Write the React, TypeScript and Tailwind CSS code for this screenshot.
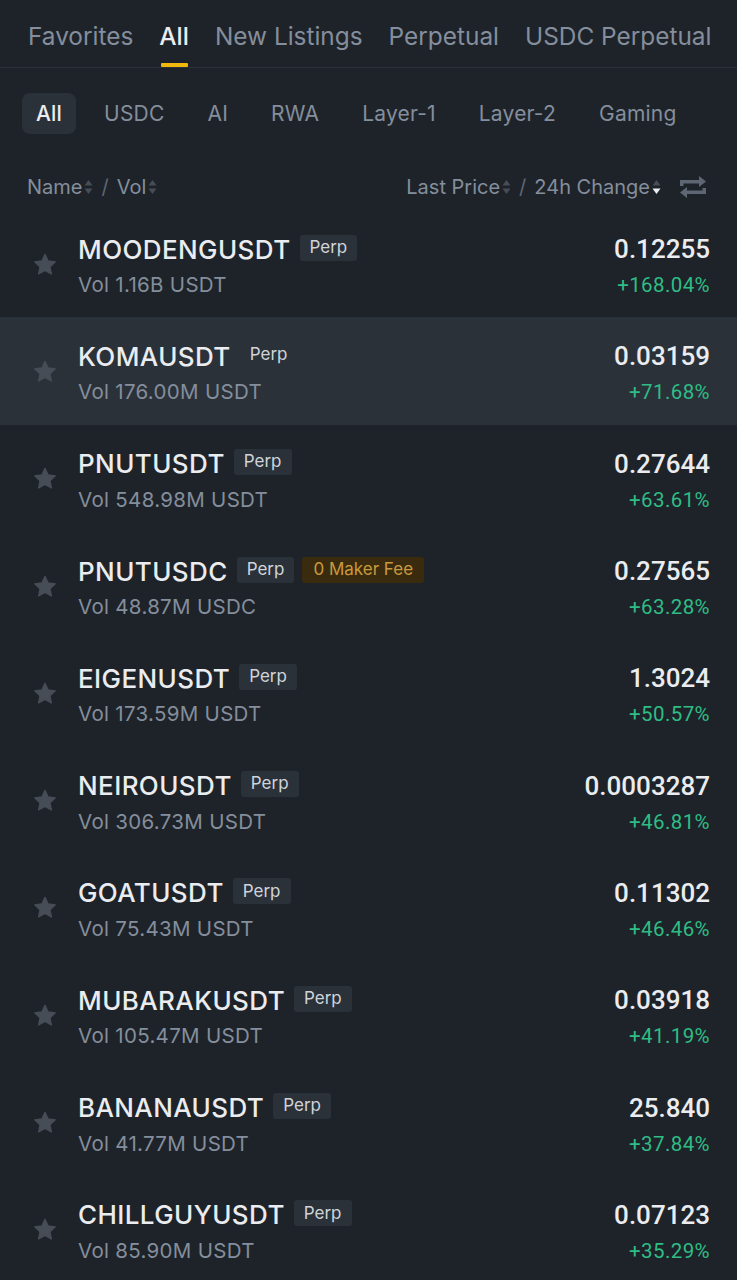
import React from 'react';

const tabs = ['Favorites', 'All', 'New Listings', 'Perpetual', 'USDC Perpetual'];
const chips = ['All', 'USDC', 'AI', 'RWA', 'Layer-1', 'Layer-2', 'Gaming'];

interface Market {
  symbol: string;
  vol: string;
  price: string;
  change: string;
  makerFee?: boolean;
  active?: boolean;
}

const markets: Market[] = [
  { symbol: 'MOODENGUSDT', vol: 'Vol 1.16B USDT', price: '0.12255', change: '+168.04%' },
  { symbol: 'KOMAUSDT', vol: 'Vol 176.00M USDT', price: '0.03159', change: '+71.68%', active: true },
  { symbol: 'PNUTUSDT', vol: 'Vol 548.98M USDT', price: '0.27644', change: '+63.61%' },
  { symbol: 'PNUTUSDC', vol: 'Vol 48.87M USDC', price: '0.27565', change: '+63.28%', makerFee: true },
  { symbol: 'EIGENUSDT', vol: 'Vol 173.59M USDT', price: '1.3024', change: '+50.57%' },
  { symbol: 'NEIROUSDT', vol: 'Vol 306.73M USDT', price: '0.0003287', change: '+46.81%' },
  { symbol: 'GOATUSDT', vol: 'Vol 75.43M USDT', price: '0.11302', change: '+46.46%' },
  { symbol: 'MUBARAKUSDT', vol: 'Vol 105.47M USDT', price: '0.03918', change: '+41.19%' },
  { symbol: 'BANANAUSDT', vol: 'Vol 41.77M USDT', price: '25.840', change: '+37.84%' },
  { symbol: 'CHILLGUYUSDT', vol: 'Vol 85.90M USDT', price: '0.07123', change: '+35.29%' },
];

function SortArrows({ active }: { active?: boolean }) {
  return (
    <svg width="9" height="16" viewBox="0 0 9 16" className="ml-[2px]">
      <path d="M4.5 1 L8.5 6.5 L0.5 6.5 Z" fill="#474d57" />
      <path d="M4.5 15 L8.5 9.5 L0.5 9.5 Z" fill={active ? '#eaecef' : '#474d57'} />
    </svg>
  );
}

function Star() {
  return (
    <svg width="26" height="26" viewBox="0 0 24 24">
      <path
        d="M12 2.2l2.9 6.1 6.6.8-4.9 4.6 1.3 6.6L12 17l-5.9 3.3 1.3-6.6-4.9-4.6 6.6-.8z"
        fill="#474d57"
        stroke="#474d57"
        strokeWidth="1.2"
        strokeLinejoin="round"
      />
    </svg>
  );
}

function SwapIcon() {
  return (
    <svg width="30" height="26" viewBox="0 0 30 26">
      <path d="M2 12V6h19V2l7 5.5-7 5.5V9.5H5.5V12z" fill="#5e6673" />
      <path d="M28 14v6H9v4l-7-5.5L9 13v3.5h15.5V14z" fill="#5e6673" />
    </svg>
  );
}

function Row({ m }: { m: Market }) {
  return (
    <div className={`flex items-center h-[107.3px] pl-[32px] pr-[27px] pt-[2px] ${m.active ? 'bg-[#2b3139]' : ''}`}>
      <div className="w-[46px] flex items-center">
        <Star />
      </div>
      <div className="flex-1 flex flex-col">
        <div className="flex items-center h-[36px]">
          <span className="text-[26px] font-medium text-[#eaecef] tracking-[0.4px]">{m.symbol}</span>
          <span className="ml-[9px] mb-[3px] px-[10px] h-[26px] flex items-center rounded-[3px] bg-[#2b3139] text-[17px] text-[#d0d4da]">
            Perp
          </span>
          {m.makerFee && (
            <span className="ml-[8px] mb-[3px] px-[11px] h-[26px] flex items-center rounded-[3px] bg-[#3a2b0f] text-[17px] text-[#c99a3c]">
              0 Maker Fee
            </span>
          )}
        </div>
        <span className="text-[20.5px] text-[#848e9c] leading-[26px] mt-[5px] tracking-[0.3px]">{m.vol}</span>
      </div>
      <div className="flex flex-col items-end font-['Roboto',sans-serif]">
        <span className="text-[26px] font-medium text-[#eaecef] leading-[36px]">{m.price}</span>
        <span className="text-[20.5px] text-[#2ebd85] leading-[26px] mt-[5px] tracking-[0.4px]">{m.change}</span>
      </div>
    </div>
  );
}

export default function App() {
  return (
    <div className="w-[737px] h-[1280px] overflow-hidden bg-[#1e2329] font-['Inter','Noto_Sans',sans-serif]">
      <div className="flex items-end gap-[26px] pl-[28px] h-[68px] border-b border-[#2b3139]">
        {tabs.map((t) => (
          <div key={t} className="flex flex-col items-center">
            <span className={`text-[24.4px] leading-[30px] ${t === 'All' ? 'text-[#eaecef] font-medium' : 'text-[#848e9c]'}`}>
              {t}
            </span>
            <div className={`mt-[12px] h-[4px] w-[27px] rounded-[1px] ${t === 'All' ? 'bg-[#f0b90b]' : 'bg-transparent'}`} />
          </div>
        ))}
      </div>
      <div className="flex items-center pl-[22px] pt-[25px] gap-[13px]">
        {chips.map((c) => (
          <span
            key={c}
            className={`h-[41px] flex items-center rounded-[8px] text-[21px] tracking-[0.2px] ${
              c === 'All' ? 'px-[14px] bg-[#2b3139] text-[#eaecef] font-medium' : 'px-[15px] text-[#848e9c]'
            }`}
          >
            {c}
          </span>
        ))}
      </div>
      <div className="flex items-center justify-between pl-[27px] pr-[29px] mt-[33px] h-[40px] text-[20px] text-[#848e9c]">
        <div className="flex items-center">
          <span>Name</span>
          <SortArrows />
          <span className="mx-[8px] text-[#5e6673]">/</span>
          <span>Vol</span>
          <SortArrows />
        </div>
        <div className="flex items-center">
          <span>Last Price</span>
          <SortArrows />
          <span className="mx-[8px] text-[#5e6673]">/</span>
          <span>24h Change</span>
          <SortArrows active />
          <span className="ml-[17px] flex items-center">
            <SwapIcon />
          </span>
        </div>
      </div>
      <div className="mt-[3px]">
        {markets.map((m) => (
          <Row key={m.symbol} m={m} />
        ))}
      </div>
    </div>
  );
}
